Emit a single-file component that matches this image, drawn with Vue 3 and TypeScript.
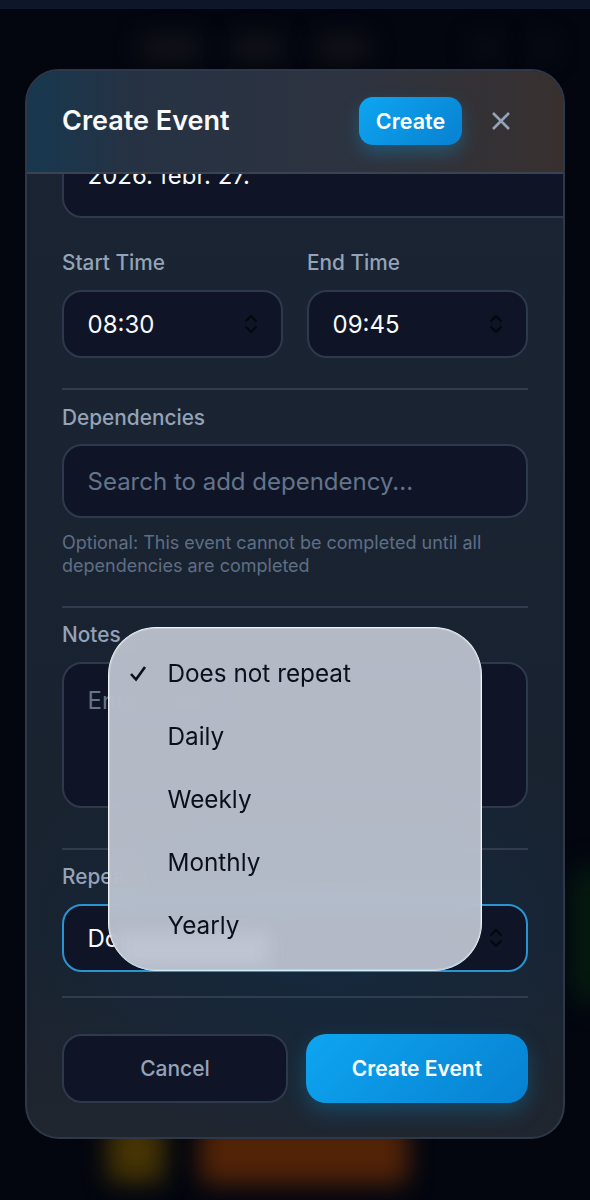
<script setup lang="ts">
const options: string[] = ['Does not repeat', 'Daily', 'Weekly', 'Monthly', 'Yearly']
const selected = 'Does not repeat'
</script>

<template>
  <div class="page">
    <div class="backdrop" aria-hidden="true">
      <span class="blob nav-a"></span>
      <span class="blob nav-b"></span>
      <span class="blob nav-c"></span>
      <span class="blob nav-d"></span>
      <span class="blob nav-e"></span>
      <span class="blob yellow"></span>
      <span class="blob orange"></span>
      <span class="blob green"></span>
    </div>
    <div class="topbar"></div>

    <section class="modal">
      <header class="modal-head">
        <h1>Create Event</h1>
        <button class="btn-small">Create</button>
        <button class="close" aria-label="Close">
          <svg viewBox="0 0 20 20" width="20" height="20"><path d="M2 2 18 18M18 2 2 18" /></svg>
        </button>
      </header>

      <div class="modal-body">
        <div class="field date"><span>2026. febr. 27.</span></div>

        <div class="time-row">
          <div>
            <label>Start Time</label>
            <div class="field select">
              <span>08:30</span>
              <svg class="updown" viewBox="0 0 16 20" width="16" height="20"><path d="M2.5 7.5 8 2l5.500 5.500M2.500 12.500 8 18l5.500-5.500" /></svg>
            </div>
          </div>
          <div>
            <label>End Time</label>
            <div class="field select">
              <span>09:45</span>
              <svg class="updown" viewBox="0 0 16 20" width="16" height="20"><path d="M2.5 7.5 8 2l5.500 5.500M2.500 12.500 8 18l5.500-5.500" /></svg>
            </div>
          </div>
        </div>

        <hr class="rule first" />
        <label class="dep-label">Dependencies</label>
        <div class="field search"><span class="placeholder">Search to add dependency...</span></div>
        <p class="hint">Optional: This event cannot be completed until all dependencies are completed</p>

        <hr class="rule" />
        <label>Notes</label>
        <div class="field notes"><span class="placeholder">Enter notes...</span></div>

        <hr class="rule notes-rule" />
        <label>Repeat</label>
        <div class="field select active">
          <span>Does not repeat</span>
          <svg class="updown" viewBox="0 0 16 20" width="16" height="20"><path d="M2.5 7.5 8 2l5.500 5.500M2.500 12.500 8 18l5.500-5.500" /></svg>
        </div>

        <hr class="rule repeat-rule" />
        <div class="actions">
          <button class="btn-cancel">Cancel</button>
          <button class="btn-primary">Create Event</button>
        </div>
      </div>

      <ul class="menu">
        <li class="menu-glow" aria-hidden="true"></li>
        <li v-for="o in options" :key="o" class="menu-item">
          <svg v-if="o === selected" class="check" viewBox="0 0 18 18" width="18" height="18"><path d="M2 10 7 15.500 16 3" /></svg>
          <span>{{ o }}</span>
        </li>
      </ul>
    </section>
  </div>
</template>

<style>
html, body { margin: 0; background: #03060f; }
</style>

<style scoped>
* { box-sizing: border-box; }
.page {
  position: relative;
  width: 590px;
  height: 1200px;
  overflow: hidden;
  background: #03060f;
  font-family: Inter, "Liberation Sans", sans-serif;
}
.backdrop { position: absolute; inset: 0; }
.blob { position: absolute; filter: blur(12px); border-radius: 8px; }
.nav-a { left: 139px; top: 36px; width: 64px; height: 24px; background: #14141a; }
.nav-b { left: 230px; top: 36px; width: 55px; height: 24px; background: #14141a; }
.nav-c { left: 315px; top: 36px; width: 55px; height: 24px; background: #14141a; }
.nav-d { left: 472px; top: 38px; width: 28px; height: 20px; background: #0d0e14; }
.nav-e { left: 532px; top: 38px; width: 22px; height: 20px; background: #0d0e14; }
.yellow { left: 108px; top: 1120px; width: 56px; height: 62px; background: #463403; }
.orange { left: 200px; top: 1120px; width: 208px; height: 64px; background: #522307; }
.green { left: 575px; top: 870px; width: 30px; height: 130px; background: #05200f; filter: blur(14px); }
.topbar { position: relative; height: 9px; background: #0e1729; }

.modal {
  position: relative;
  margin: 60px 25px 0;
  width: 540px;
  height: 1070px;
  border: 2px solid #2f3848;
  border-radius: 34px;
  overflow: hidden;
  background:
    radial-gradient(340px 220px at 300px 860px, #14293e 0%, rgba(20, 41, 62, 0) 100%),
    linear-gradient(180deg, #1a2433 0%, #19222f 80%, #20262f 100%);
}
.modal-head {
  display: flex;
  align-items: center;
  height: 103px;
  padding: 0 52px 2px 35px;
  border-bottom: 2px solid #3a4352;
  background: linear-gradient(90deg, #17384f 0%, #263243 20%, #2d3340 60%, #38302f 100%);
}
h1 {
  flex: 1;
  margin: 0;
  font-size: 27px;
  line-height: 34px;
  font-weight: 600;
  color: #f8fafc;
}
.btn-small {
  width: 103px;
  height: 48px;
  margin-right: 29px;
  border: 0;
  border-radius: 14px;
  background: linear-gradient(135deg, #0ea5f1, #0781d0);
  box-shadow: 0 8px 18px rgba(14, 165, 233, 0.3);
  color: #fff;
  font: 600 21.500px Inter, sans-serif;
}
.close { display: flex; width: 20px; height: 20px; padding: 0; border: 0; background: none; }
.close path { fill: none; stroke: #94a3b8; stroke-width: 2.6; }

.modal-body { padding: 0 35px; height: 965px; overflow: hidden; }
label {
  display: block;
  height: 26px;
  margin-bottom: 14px;
  font-size: 20.800px;
  line-height: 26px;
  font-weight: 500;
  color: #94a3b8;
}
.dep-label { position: relative; top: 1px; }
.field {
  display: flex;
  align-items: center;
  padding: 0 23.500px;
  border: 2px solid #2f394d;
  border-radius: 20px;
  background: #0f1526;
  color: #f8fafc;
  font-size: 24px;
}
.date {
  width: 600px;
  height: 68px;
  margin-top: -24px;
  align-items: flex-start;
  padding-top: 9px;
}
.select { justify-content: space-between; height: 68px; padding-right: 22px; }
.updown { flex: none; }
.updown path { fill: none; stroke: #05070d; stroke-width: 2; }
.time-row {
  display: grid;
  grid-template-columns: 221px 221px;
  column-gap: 24px;
  margin-top: 32px;
}
.rule {
  height: 2px;
  margin: 38px 0 14px;
  border: 0;
  background: #323c4e;
}
.rule.first { margin-top: 30px; }
.rule.notes-rule { margin-top: 40px; }
.rule.repeat-rule { margin: 24px 0 36px; }
.search { height: 74px; }
.placeholder { color: #64748b; }
.hint {
  margin: 14px 0 0;
  font-size: 18px;
  line-height: 22.500px;
  color: #5f6e85;
}
.hint + .rule { margin-top: 29px; }
.notes { height: 146px; align-items: flex-start; padding-top: 22px; }
.active { border-color: #2c93d3; }
.actions { display: flex; justify-content: space-between; }
.btn-cancel, .btn-primary { height: 69px; border-radius: 20px; font: 500 21px Inter, sans-serif; }
.btn-cancel { width: 226px; border: 2px solid #2f394d; background: #0f1526; color: #94a3b8; }
.btn-primary {
  width: 222px;
  border: 0;
  background: linear-gradient(135deg, #0ea5f1, #0781d0);
  box-shadow: 0 8px 22px rgba(14, 165, 233, 0.28);
  color: #fff;
  font-weight: 600;
}

.menu {
  position: absolute;
  left: 81px;
  top: 556px;
  width: 374px;
  height: 344px;
  margin: 0;
  padding: 13px 0 0;
  list-style: none;
  border: 1px solid #eef1f6;
  border-bottom-color: #c8ecfc;
  border-radius: 48px;
  overflow: hidden;
  background:
    linear-gradient(180deg, rgba(170, 198, 222, 0) 75%, rgba(170, 198, 222, 0.16) 80%, rgba(170, 198, 222, 0) 87%),
    rgba(192, 198, 210, 0.93);
  box-shadow: inset 0 0 0 1px rgba(255, 255, 255, 0.25);
  backdrop-filter: blur(14px);
}
.menu-glow {
  position: absolute;
  left: 10px;
  bottom: 4px;
  width: 150px;
  height: 32px;
  background: #bec5d3;
  filter: blur(8px);
}
.menu-item {
  position: relative;
  display: flex;
  align-items: center;
  height: 63px;
  padding-left: 58.500px;
  color: #0b0f19;
  font-size: 24.300px;
}
.check { position: absolute; left: 20px; top: 23px; }
.check path { fill: none; stroke: #0b0f19; stroke-width: 2.6; }
</style>
